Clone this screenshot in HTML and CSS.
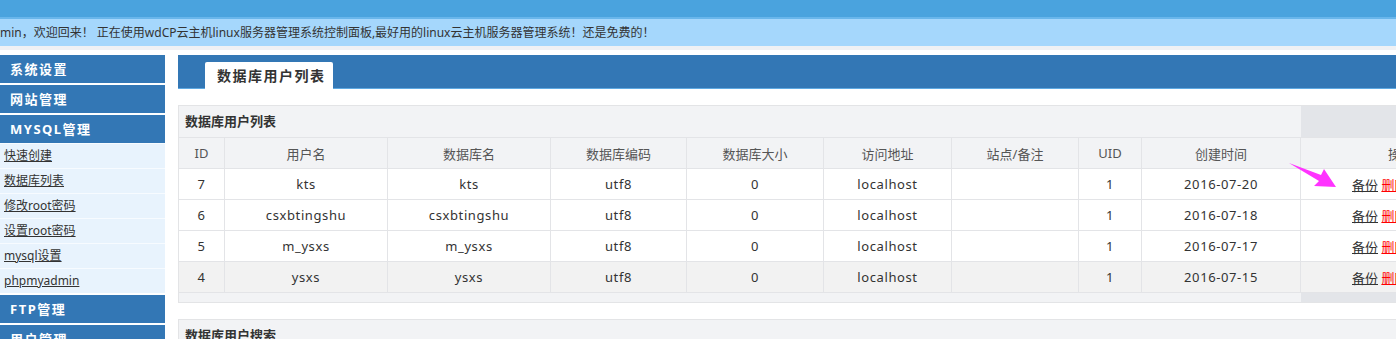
FILE: index.html
```html
<!DOCTYPE html>
<html lang="zh-CN">

<head>
    <meta charset="UTF-8">
    <meta name="viewport" content="width=device-width, initial-scale=1.0">
    <title>数据库用户列表</title>
    <link rel="stylesheet" href="styles.css">
</head>

<body>
    <div class="topbar"></div>
    <div class="welcome">min，欢迎回来！ 正在使用wdCP云主机linux服务器管理系统控制面板,最好用的linux云主机服务器管理系统！还是免费的！</div>

    <div class="layout">
        <aside class="side">
            <div class="side-head">系统设置</div>
            <div class="side-head">网站管理</div>
            <div class="side-head open">MYSQL管理</div>
            <ul class="side-sub">
                <li><a href="#">快速创建</a></li>
                <li><a href="#">数据库列表</a></li>
                <li><a href="#">修改root密码</a></li>
                <li><a href="#">设置root密码</a></li>
                <li><a href="#">mysql设置</a></li>
                <li><a href="#">phpmyadmin</a></li>
            </ul>
            <div class="side-head">FTP管理</div>
            <div class="side-head">用户管理</div>
        </aside>

        <main class="main">
            <div class="main-head">
                <span class="tab">数据库用户列表</span>
            </div>

            <div class="panel">
                <div class="panel-title">
                    <span>数据库用户列表</span>
                    <span class="fixed-cell"></span>
                </div>
                <table class="grid">
                    <colgroup>
                        <col class="c-id">
                        <col class="c-name">
                        <col class="c-name">
                        <col class="c-code">
                        <col class="c-size">
                        <col class="c-host">
                        <col class="c-note">
                        <col class="c-uid">
                        <col class="c-time">
                        <col class="c-op">
                    </colgroup>
                    <thead>
                        <tr>
                            <th>ID</th>
                            <th>用户名</th>
                            <th>数据库名</th>
                            <th>数据库编码</th>
                            <th>数据库大小</th>
                            <th>访问地址</th>
                            <th>站点/备注</th>
                            <th>UID</th>
                            <th>创建时间</th>
                            <th>操作</th>
                        </tr>
                    </thead>
                    <tbody>
                        <tr>
                            <td>7</td>
                            <td>kts</td>
                            <td>kts</td>
                            <td>utf8</td>
                            <td>0</td>
                            <td>localhost</td>
                            <td></td>
                            <td>1</td>
                            <td>2016-07-20</td>
                            <td class="op"><a href="#">备份</a> <a href="#" class="del">删除</a> <a href="#">改密</a></td>
                        </tr>
                        <tr>
                            <td>6</td>
                            <td>csxbtingshu</td>
                            <td>csxbtingshu</td>
                            <td>utf8</td>
                            <td>0</td>
                            <td>localhost</td>
                            <td></td>
                            <td>1</td>
                            <td>2016-07-18</td>
                            <td class="op"><a href="#">备份</a> <a href="#" class="del">删除</a> <a href="#">改密</a></td>
                        </tr>
                        <tr>
                            <td>5</td>
                            <td>m_ysxs</td>
                            <td>m_ysxs</td>
                            <td>utf8</td>
                            <td>0</td>
                            <td>localhost</td>
                            <td></td>
                            <td>1</td>
                            <td>2016-07-17</td>
                            <td class="op"><a href="#">备份</a> <a href="#" class="del">删除</a> <a href="#">改密</a></td>
                        </tr>
                        <tr class="hover">
                            <td>4</td>
                            <td>ysxs</td>
                            <td>ysxs</td>
                            <td>utf8</td>
                            <td>0</td>
                            <td>localhost</td>
                            <td></td>
                            <td>1</td>
                            <td>2016-07-15</td>
                            <td class="op"><a href="#">备份</a> <a href="#" class="del">删除</a> <a href="#">改密</a></td>
                        </tr>
                    </tbody>
                </table>
                <div class="panel-foot">
                    <span></span>
                    <span class="fixed-cell"></span>
                </div>
            </div>

            <div class="panel">
                <div class="panel-title">
                    <span>数据库用户搜索</span>
                </div>
            </div>
        </main>
    </div>

    <!-- arrow drawn over the screenshot -->
    <svg class="arrow" width="54" height="30" viewBox="0 0 54 30">
        <polygon points="3,3 35,15 38,9 50,27 28,26 33,21" fill="#f3f" />
    </svg>
</body></html>
```

FILE: styles.css
```css
html,
body {
    margin: 0;
    overflow: hidden;
}

body {
    font-family: "Noto Sans", "Noto Sans CJK SC", sans-serif;
    color: #333;
    background: #fff;
    position: relative;
}

a {
    color: #333;
}

.topbar {
    height: 17px;
    background: #4aa3de;
    border-bottom: 2px solid #69b6eb;
}

.welcome {
    height: 27px;
    line-height: 27px;
    background: #a5d7fc;
    border-bottom: 4px solid #eff1f4;
    font-size: 12px;
    white-space: nowrap;
}

.layout {
    display: flex;
    gap: 13px;
    padding-top: 5px;
}

/* sidebar */
.side {
    width: 165px;
    flex-shrink: 0;
}

.side-head {
    height: 28px;
    line-height: 28px;
    margin-bottom: 2px;
    padding-left: 10px;
    background: #3377b5;
    color: #fff;
    font-size: 13px;
    font-weight: bold;
    letter-spacing: 1.5px;
}

.side-head.open {
    margin-bottom: 0;
}

.side-sub {
    list-style: none;
    margin: 0 0 2px;
    padding: 0;
}

.side-sub li {
    height: 24px;
    line-height: 24px;
    border-top: 1px solid #f7fbff;
    background: #e8f3fd;
    padding-left: 4px;
    font-size: 12px;
}

/* main */
.main {
    flex: 1;
    min-width: 0;
    overflow: hidden;
}

.main-head {
    display: flex;
    align-items: flex-end;
    height: 33px;
    padding-left: 27px;
    background: #3377b5;
    border-bottom: 1px solid #5ea9e2;
}

.tab {
    height: 27px;
    line-height: 28px;
    margin-bottom: -1px;
    padding: 0 7px 0 12px;
    background: #fff;
    border-radius: 2px 2px 0 0;
    font-size: 14px;
    font-weight: bold;
    letter-spacing: 1.5px;
    color: #333;
}

.panel {
    width: 1322px;
    margin-top: 16px;
    border: 1px solid #e3e4e6;
    background: #f2f3f5;
}

.panel+.panel {
    margin-top: 16px;
}

.panel-title {
    display: grid;
    grid-template-columns: 1fr 200px;
    height: 31px;
    line-height: 31px;
    font-size: 13px;
    font-weight: bold;
}

.panel-title span:first-child {
    padding-left: 6px;
}

.fixed-cell {
    background: #e3e5e9;
}

.panel-foot {
    display: grid;
    grid-template-columns: 1fr 200px;
    height: 9px;
    border-top: 1px solid #e3e4e7;
}

.grid {
    width: 1322px;
    table-layout: fixed;
    border-collapse: separate;
    border-spacing: 0;
}

.c-id { width: 46px; }
.c-name { width: 163px; }
.c-code { width: 136px; }
.c-size { width: 137px; }
.c-host { width: 128px; }
.c-note { width: 127px; }
.c-uid { width: 63px; }
.c-time { width: 159px; }
.c-op { width: 200px; }

.grid th,
.grid td {
    box-sizing: border-box;
    height: 31px;
    padding: 0;
    border-top: 1px solid #e3e4e7;
    border-right: 1px solid #e3e4e7;
    text-align: center;
    white-space: nowrap;
}

.grid th:last-child,
.grid td:last-child {
    border-right: 0;
}

.grid th {
    font-weight: normal;
    font-size: 13px;
    color: #555;
}

.grid td {
    background: #fff;
    font-size: 13px;
    letter-spacing: 0.6px;
    color: #333;
}

.grid tr.hover td {
    background: #f2f2f2;
}

.grid td.op {
    text-align: left;
    padding-left: 51px;
    letter-spacing: 0;
}

.op .del {
    color: #f00;
}

.arrow {
    position: absolute;
    left: 1286px;
    top: 160px;
}
```
